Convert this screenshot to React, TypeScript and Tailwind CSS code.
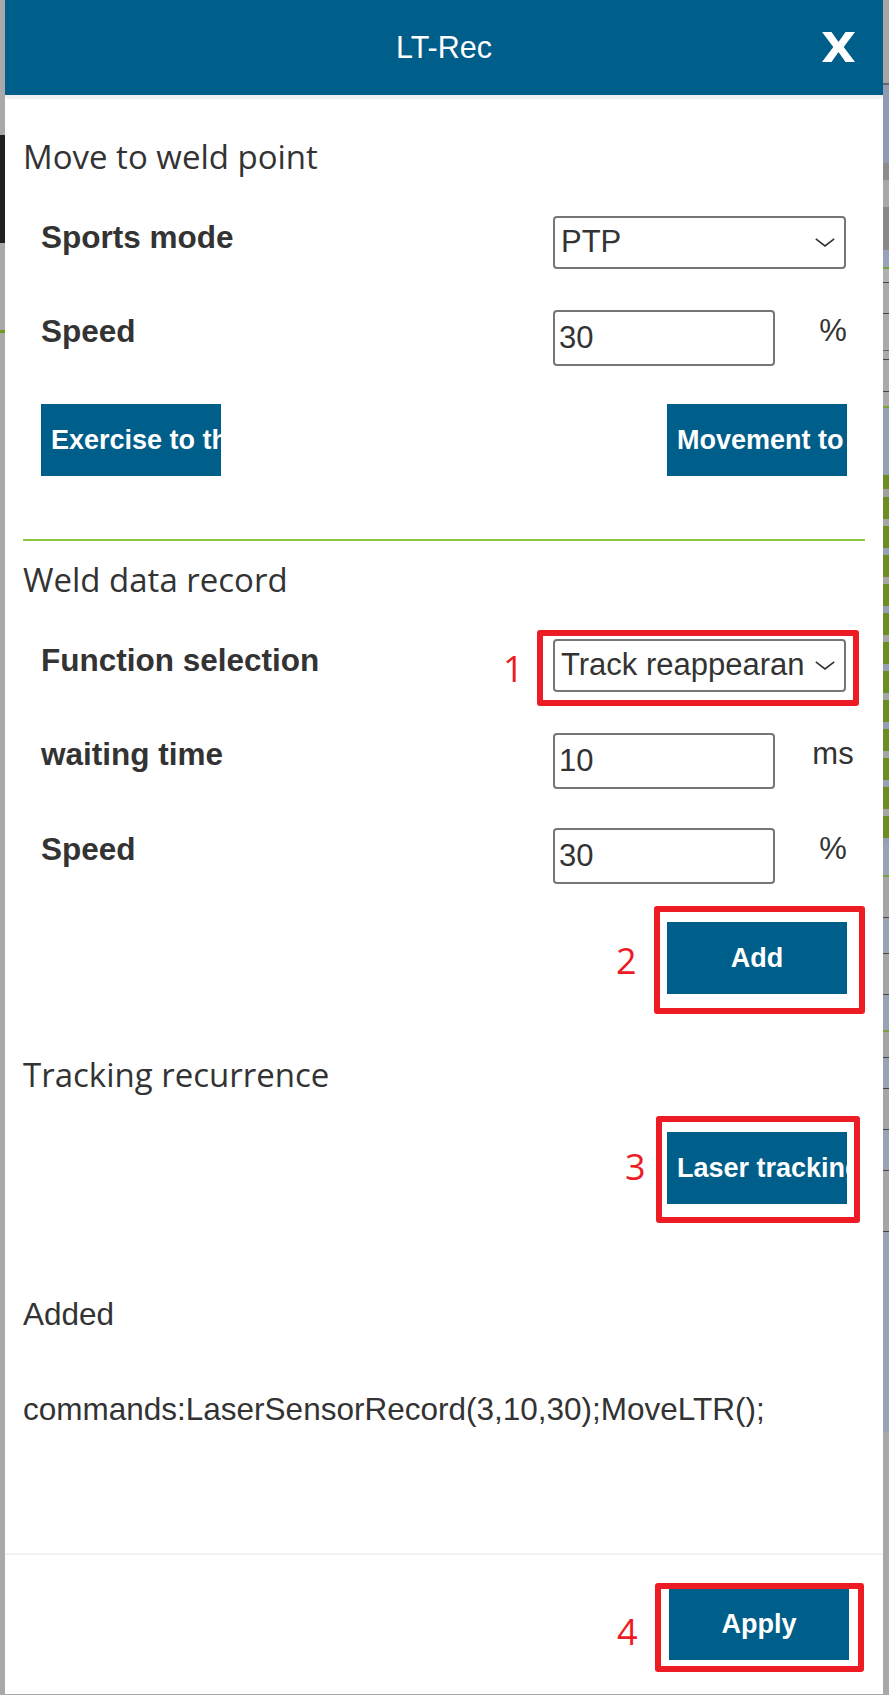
import React from "react";

const ARIAL = "font-['Liberation_Sans',Arial,sans-serif]";
const SEGOE = "font-['Open_Sans','Noto_Sans',sans-serif]";

function Chevron() {
  return (
    <svg width="20" height="9" viewBox="0 0 20 9" className="shrink-0">
      <polyline points="0.8,0.8 10,8 19.2,0.8" fill="none" stroke="#333" strokeWidth="1.6" />
    </svg>
  );
}

function SelectBox({ value }: { value: string }) {
  return (
    <div className={`h-[53px] w-full border-2 border-[#767676] rounded-[4px] bg-white flex items-center pl-[6px] pr-[9px] gap-[10px] text-[31px] text-[#333] ${ARIAL}`}>
      <span className="flex-1 min-w-0 overflow-hidden whitespace-nowrap">{value}</span>
      <Chevron />
    </div>
  );
}

function InputBox({ value }: { value: string }) {
  return (
    <input
      readOnly
      value={value}
      className={`h-[56px] w-[222px] border-2 border-[#767676] rounded-[4px] bg-white px-[4px] text-[31px] text-[#333] outline-none ${ARIAL}`}
    />
  );
}

function Label({ children }: { children: React.ReactNode }) {
  return <div className={`flex-1 text-[31.5px] font-bold leading-[42px] text-[#333] ${ARIAL}`}>{children}</div>;
}

function InputRow({ label, value, unit, className }: { label: string; value: string; unit: string; className: string }) {
  return (
    <div className={`flex items-start pl-[18px] pr-[19px] ${className}`}>
      <Label>{label}</Label>
      <div className="w-[293px] flex items-start">
        <InputBox value={value} />
        <div className={`ml-auto w-[26px] flex justify-center whitespace-nowrap text-[31px] leading-[42px] text-[#333] ${ARIAL}`}>{unit}</div>
      </div>
    </div>
  );
}

function Btn({ children, w = "w-[180px]" }: { children: React.ReactNode; w?: string }) {
  return (
    <div className={`${w} h-[72px] bg-[#005e8a] text-white text-[27px] font-bold px-[10px] flex items-center overflow-hidden whitespace-nowrap ${ARIAL}`}>
      <span className="w-full text-center">{children}</span>
    </div>
  );
}

function Title({ children, className }: { children: React.ReactNode; className: string }) {
  return <div className={`text-[33px] leading-[40px] text-[#333] ${SEGOE} ${className}`}>{children}</div>;
}

function Digit({ children, className }: { children: React.ReactNode; className: string }) {
  return <div className={`absolute text-[36px] leading-[36px] text-[#ed1c24] ${SEGOE} ${className}`}>{children}</div>;
}

function RightStrip() {
  const blocks: [number, string][] = [
    [83, "#a6a6a6"], [2, "#666666"], [78, "#8f9bb0"], [17, "#8c8c8c"], [27, "#a8a8a8"], [43, "#888888"],
    [17, "#98a2b8"], [2, "#7aa23a"], [13, "#b0b0b0"], [1, "#444444"], [30, "#aaaaaa"], [1, "#444444"],
    [36, "#aaaaaa"], [1, "#666666"], [8, "#aaaaaa"], [1, "#444444"], [31, "#aaaaaa"], [1, "#444444"],
    [14, "#a9a9a9"], [2, "#7aa23a"], [67, "#95a0b3"], [14, "#6b8e23"], [8, "#a0a0a0"],
  ];
  const chev: [number, string][] = [];
  for (let i = 0; i < 12; i++) {
    chev.push([22, "#6b8e23"]);
    chev.push([7, i % 2 === 0 ? "#a5a5a5" : "#96a0b4"]);
  }
  const tail: [number, string][] = [
    [30, "#9aa3b6"], [2, "#7aa23a"], [40, "#a5a5a5"], [1, "#444444"], [35, "#9aa3b6"], [1, "#444444"],
    [40, "#a5a5a5"], [1, "#444444"], [35, "#9aa3b6"], [2, "#7aa23a"], [25, "#a5a5a5"], [1, "#444444"],
    [30, "#9aa3b6"], [1, "#444444"], [40, "#a5a5a5"], [1, "#444444"], [40, "#9aa3b6"], [1, "#444444"],
    [60, "#a5a5a5"], [1, "#444444"], [200, "#9aa3b6"],
  ];
  const all = [...blocks, ...chev, ...tail];
  return (
    <div className="w-[6px] h-full flex flex-col overflow-hidden">
      {all.map(([h, c], i) => (
        <div key={i} className="w-full shrink-0" style={{ height: h, background: c }} />
      ))}
    </div>
  );
}

export default function App() {
  return (
    <div className="w-[889px] h-[1695px] bg-[#a8a8a8] flex overflow-hidden">
      {/* left strip */}
      <div className="w-[5px] h-full flex flex-col">
        <div className="h-[135px] bg-[#a9a9a9]" />
        <div className="h-[108px] bg-[#1f1f1f]" />
        <div className="h-[87px] bg-[#a9a9a9]" />
        <div className="h-[3px] bg-[#6b9a1f]" />
        <div className="flex-1 bg-[#a9a9a9]" />
      </div>

      {/* modal */}
      <div className="w-[878px] h-[1694px] bg-white flex flex-col">
        <div className="h-[95px] bg-[#005e8a] relative flex items-center justify-center shrink-0">
          <span className={`text-white text-[30.5px] ${ARIAL}`}>LT-Rec</span>
          <svg className="absolute left-[817px] top-[32px]" width="33" height="30" viewBox="0 0 33 30">
            <polygon
              fill="#ffffff"
              points="0,0 9.5,0 16.5,10 23.5,0 33,0 21.7,15 33,30 23.5,30 16.5,20 9.5,30 0,30 11.3,15"
            />
          </svg>
        </div>
        <div className="h-[4px] bg-[#f1f1f1] shrink-0" />

        <div className="flex-1 px-[18px] flex flex-col">
          <Title className="mt-[38px]">Move to weld point</Title>

          <div className="mt-[39px] flex items-start pl-[18px] pr-[19px]">
            <Label>Sports mode</Label>
            <div className="w-[293px]">
              <SelectBox value="PTP" />
            </div>
          </div>

          <InputRow className="mt-[41px]" label="Speed" value="30" unit="%" />

          <div className="mt-[38px] flex justify-between pl-[18px] pr-[18px]">
            <Btn>Exercise to the weld point</Btn>
            <Btn>Movement to the weld point</Btn>
          </div>

          <div className="mt-[63px] h-[2px] bg-[#8dc63f]" />

          <Title className="mt-[19px]">Weld data record</Title>

          <div className="mt-[39px] flex items-start pl-[18px] pr-[19px]">
            <Label>Function selection</Label>
            <div className="w-[293px] relative">
              <SelectBox value="Track reappearance" />
              <div className="absolute left-[-16px] top-[-9px] w-[322px] h-[76px] border-[6px] border-[#ed1c24] rounded-[3px]" />
              <Digit className="left-[-50px] top-[12px]">1</Digit>
            </div>
          </div>

          <InputRow className="mt-[41px]" label="waiting time" value="10" unit="ms" />
          <InputRow className="mt-[39px]" label="Speed" value="30" unit="%" />

          <div className="mt-[38px] flex justify-end pr-[18px]">
            <div className="relative">
              <Btn>Add</Btn>
              <div className="absolute left-[-13px] top-[-16px] w-[211px] h-[108px] border-[6px] border-[#ed1c24] rounded-[3px]" />
              <Digit className="left-[-51px] top-[21px]">2</Digit>
            </div>
          </div>

          <Title className="mt-[61px]">Tracking recurrence</Title>

          <div className="mt-[37px] flex justify-end pr-[18px]">
            <div className="relative">
              <Btn>Laser tracking recurrence</Btn>
              <div className="absolute left-[-11px] top-[-16px] w-[204px] h-[107px] border-[6px] border-[#ed1c24] rounded-[3px]" />
              <Digit className="left-[-42px] top-[17px]">3</Digit>
            </div>
          </div>

          <div className={`mt-[90px] text-[31.5px] leading-[40px] text-[#333] ${ARIAL}`}>Added</div>
          <div className={`mt-[55px] text-[31.5px] leading-[40px] text-[#333] whitespace-nowrap ${ARIAL}`}>
            commands:LaserSensorRecord(3,10,30);MoveLTR();
          </div>
        </div>

        <div className="h-[141px] shrink-0 border-t-2 border-[#f1f1f1] flex items-start justify-end pt-[33px] pr-[34px]">
          <div className="relative">
            <Btn w="w-[180px]">Apply</Btn>
            <div className="absolute left-[-14px] top-[-5px] w-[209px] h-[89px] border-[6px] border-[#ed1c24] rounded-[3px]" />
            <Digit className="left-[-52px] top-[26px]">4</Digit>
          </div>
        </div>
      </div>

      <RightStrip />
    </div>
  );
}
